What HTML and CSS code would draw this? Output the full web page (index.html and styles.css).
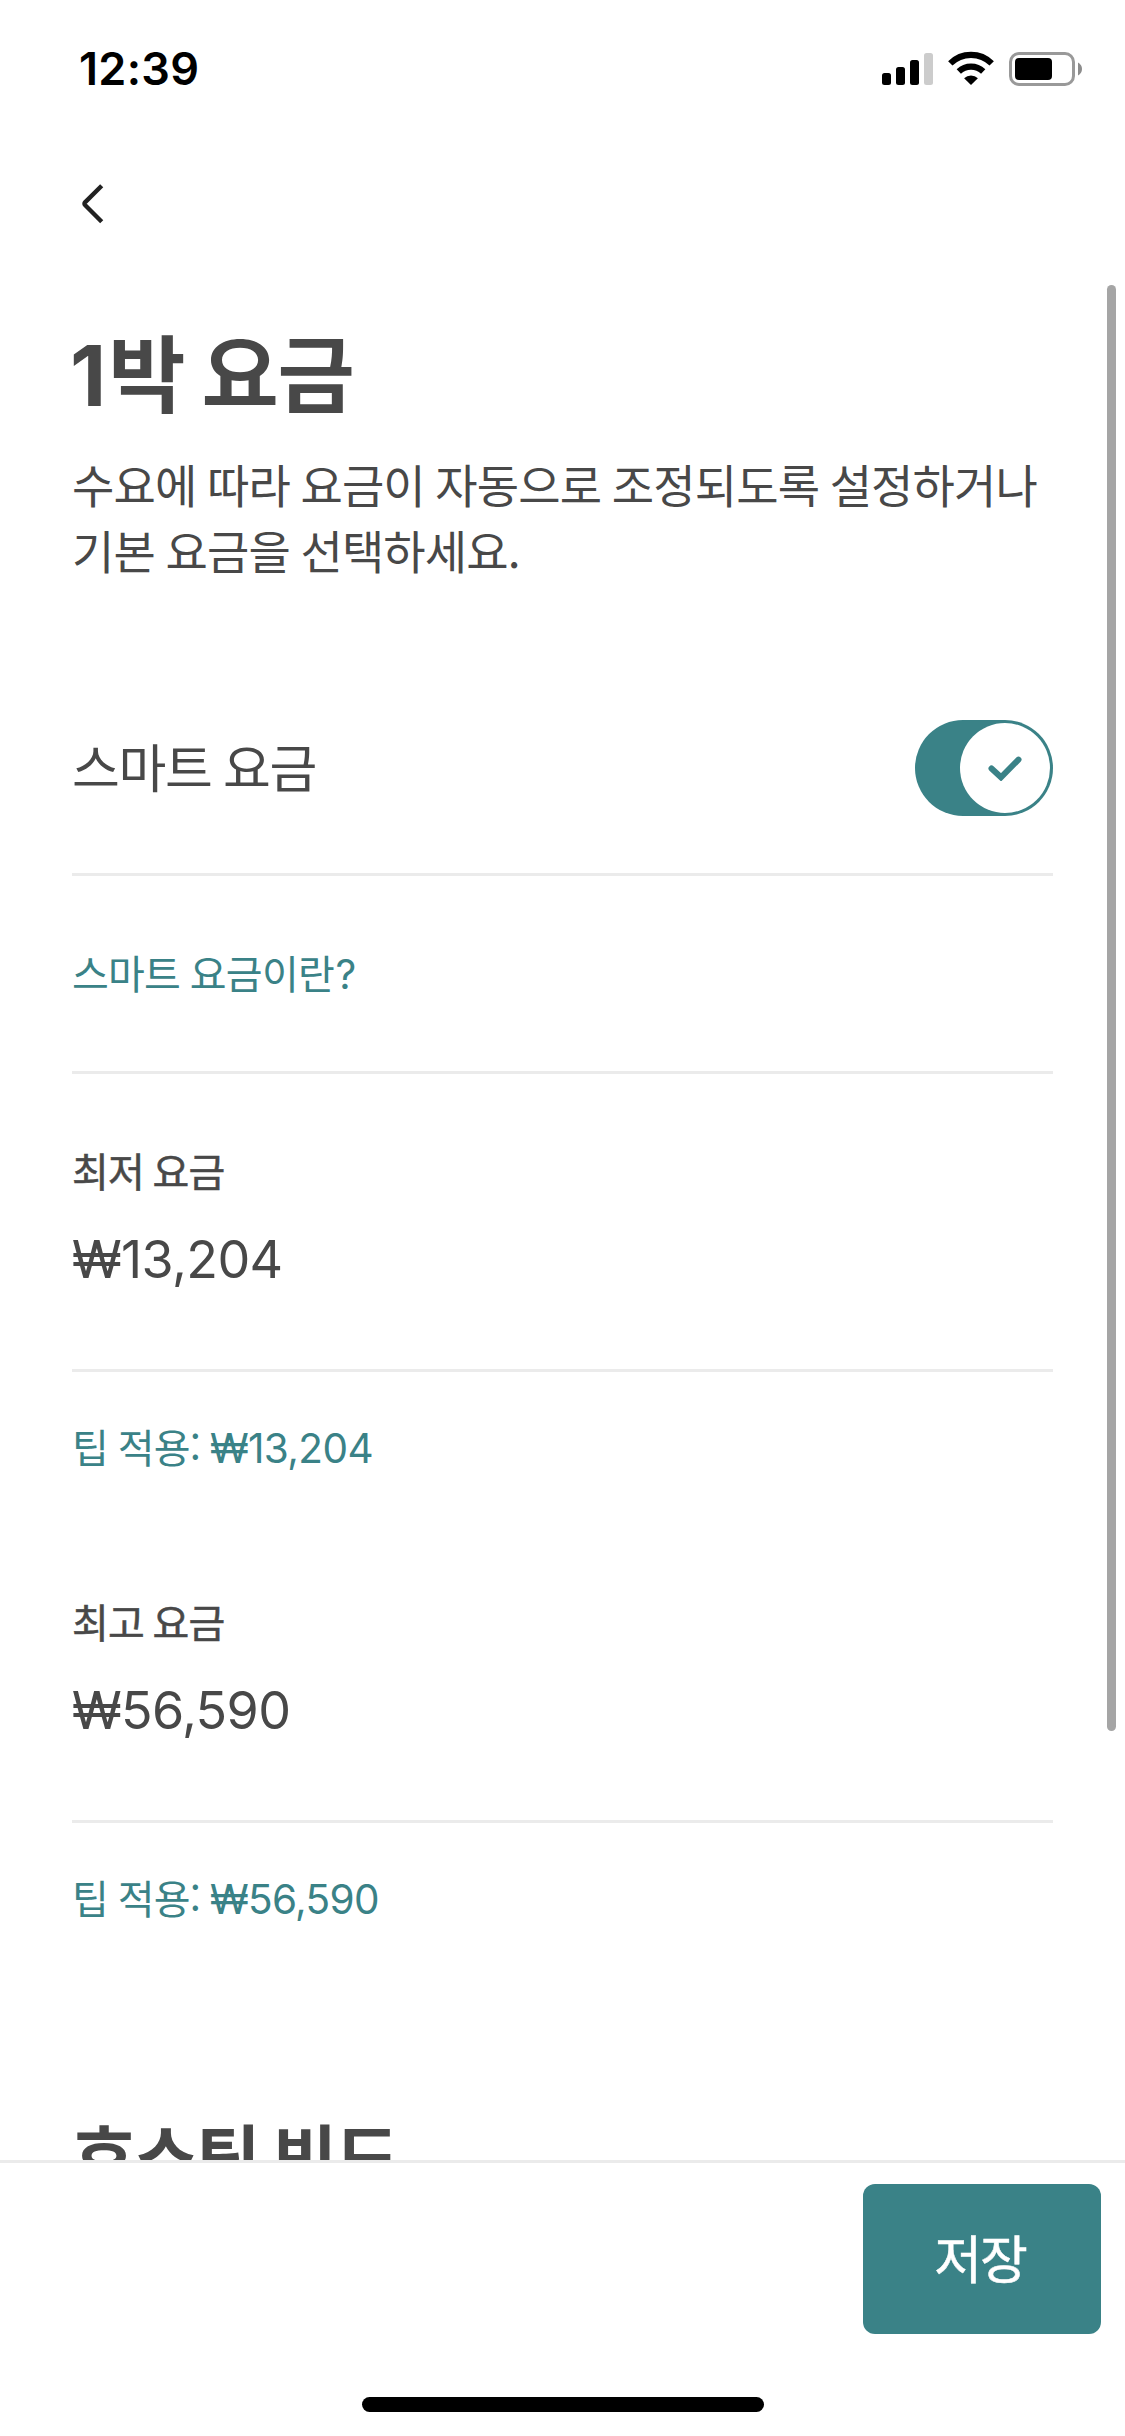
FILE: index.html
```html
<!DOCTYPE html>
<html lang="ko">
<head>
<meta charset="utf-8">
<title>1박 요금</title>
<link rel="stylesheet" href="styles.css">
</head>
<body>
<div class="screen">
  <div class="status-bar">
    <span class="clock">12:39</span>
    <svg class="status-icons" width="204" height="40" viewBox="0 0 204 40">
      <rect x="0" y="22" width="9" height="12" rx="2.5"/>
      <rect x="14" y="16" width="9" height="18" rx="2.5"/>
      <rect x="28" y="9" width="9" height="25" rx="2.5"/>
      <rect x="42" y="2" width="9" height="32" rx="2.5" fill="#ccc"/>
      <g fill="none" stroke="#000" stroke-width="6.2">
        <path d="M68.3 12.4a29.4 29.4 0 0 1 41.4 0"/>
        <path d="M76.8 20.5a17.6 17.6 0 0 1 24.4 0"/>
      </g>
      <path d="M89 34l-6.9-6.8a10.2 10.2 0 0 1 13.8 0z"/>
      <rect x="128.5" y="2.5" width="63" height="31" rx="8.5" fill="none" stroke="#999" stroke-width="3"/>
      <rect x="133" y="7" width="37" height="22" rx="4"/>
      <path d="M196 11.5c2.6 1.5 4 3.9 4 6.5s-1.4 5-4 6.5z" fill="#8c8c8c"/>
    </svg>
  </div>

  <header class="nav">
    <svg class="back" width="24" height="42" viewBox="0 0 24 42">
      <path d="M21.7 2.8L5 19.4a1.8 1.8 0 0 0 0 2.6L21.7 38.7" fill="none" stroke="#222" stroke-width="4.4" stroke-linejoin="round"/>
    </svg>
  </header>

  <main class="content">
    <h1 class="title"><span class="title-num">1</span>박 요금</h1>
    <p class="description">수요에 따라 요금이 자동으로 조정되도록 설정하거나<br>기본 요금을 선택하세요.</p>

    <div class="toggle-row">
      <span class="toggle-label">스마트 요금</span>
      <div class="toggle">
        <div class="knob">
          <svg width="34" height="25" viewBox="0 0 34 25">
            <path d="M3.5 12.5L13 21.3L30.5 3.6" fill="none" stroke="#3a8287" stroke-width="6" stroke-linecap="round" stroke-linejoin="miter"/>
          </svg>
        </div>
      </div>
    </div>

    <div class="link-row"><a class="link">스마트 요금이란<span class="latin question">?</span></a></div>

    <section class="price">
      <div class="field">
        <div class="label">최저 요금</div>
        <div class="value">₩13,204</div>
      </div>
      <div class="tip">팁 적용: <span class="latin">₩13,204</span></div>
    </section>

    <section class="price">
      <div class="field">
        <div class="label">최고 요금</div>
        <div class="value">₩56,590</div>
      </div>
      <div class="tip">팁 적용: <span class="latin">₩56,590</span></div>
    </section>

    <h2 class="section-title">호스팅 빈도</h2>
  </main>

  <footer class="footer">
    <button class="save">저장</button>
    <div class="home-indicator"></div>
  </footer>

  <div class="scrollbar"></div>
</div>
</body>
</html>
```
FILE: styles.css
```css
* {
  box-sizing: border-box;
}

body {
  margin: 0;
  background: #fff;
  color: #484848;
  font-family: "Noto Sans CJK KR", sans-serif;
}

.screen {
  position: relative;
  display: flex;
  flex-direction: column;
  width: 1125px;
  height: 2436px;
  overflow: hidden;
}

.status-bar {
  display: flex;
  flex: none;
  justify-content: space-between;
  height: 132px;
  padding: 37px 39px 0 79px;
}

.clock {
  color: #000;
  font: 600 45px/64px Inter, sans-serif;
  letter-spacing: 0.3px;
}

.status-icons {
  margin-top: 14px;
}

.nav {
  flex: none;
  height: 132px;
  padding: 51px 80px 0;
}

.back {
  display: block;
}

.content {
  flex: 1;
  min-height: 0;
  padding: 56px 72px 0;
  overflow: hidden;
}

.title {
  margin: 0;
  font-size: 84px;
  font-weight: 700;
  line-height: 100px;
  letter-spacing: -1.3px;
  word-spacing: -5px;
}

.title-num {
  margin-left: -2px;
  font-family: Inter, sans-serif;
  line-height: 0;
  letter-spacing: 2px;
}

.description {
  margin: 30px 0 0;
  font-size: 46px;
  line-height: 66px;
  letter-spacing: -0.85px;
  word-spacing: -1.5px;
  white-space: nowrap;
}

.toggle-row {
  display: flex;
  align-items: center;
  justify-content: space-between;
  margin-top: 81px;
  padding: 57px 0;
  border-bottom: 3px solid #ebebeb;
}

.toggle-label {
  padding-bottom: 5px;
  font-size: 52px;
  line-height: 64px;
  letter-spacing: -1.35px;
  word-spacing: -1.7px;
}

.toggle {
  display: flex;
  justify-content: flex-end;
  width: 138px;
  height: 96px;
  padding: 3px;
  border-radius: 48px;
  background: #3a8287;
}

.knob {
  display: flex;
  align-items: center;
  justify-content: center;
  width: 90px;
  height: 90px;
  border-radius: 50%;
  background: #fff;
}

.link-row {
  display: flex;
  align-items: center;
  height: 198px;
  padding-bottom: 3px;
  border-bottom: 3px solid #ebebeb;
}

.link,
.tip {
  color: #3a8287;
  font-size: 40px;
  line-height: 48px;
  letter-spacing: -0.75px;
  word-spacing: -0.8px;
}

.field {
  padding: 72px 0 77px;
  border-bottom: 3px solid #ebebeb;
}

.label {
  font-size: 40px;
  line-height: 48px;
  letter-spacing: -0.8px;
  word-spacing: -2px;
  -webkit-text-stroke: 0.5px currentColor;
}

.value {
  margin-top: 34px;
  font-family: Inter, sans-serif;
  font-size: 52px;
  line-height: 64px;
  letter-spacing: -0.6px;
}

.tip {
  margin: 50px 0 55px;
}

.latin {
  font-family: Inter, sans-serif;
  font-size: 40.5px;
  line-height: 0;
  letter-spacing: -0.6px;
}

.question {
  margin-left: 1.5px;
}

.section-title {
  margin: 188px 0 0;
  font-size: 70px;
  font-weight: 700;
  line-height: 90px;
  letter-spacing: -2.3px;
  word-spacing: -2.8px;
}

.footer {
  display: flex;
  flex: none;
  flex-direction: column;
  height: 276px;
  padding: 21px 24px 24px;
  border-top: 3px solid #ebebeb;
  background: #fff;
}

.save {
  align-self: flex-end;
  width: 238px;
  height: 150px;
  padding: 0 4px 6px 0;
  border: 0;
  border-radius: 12px;
  background: #3a8287;
  color: #fff;
  font-family: inherit;
  font-size: 52px;
  letter-spacing: -2px;
  -webkit-text-stroke: 0.5px currentColor;
}

.home-indicator {
  align-self: center;
  width: 402px;
  height: 15px;
  margin-top: auto;
  border-radius: 8px;
  background: #000;
}

.scrollbar {
  position: absolute;
  top: 285px;
  right: 9px;
  width: 9px;
  height: 1446px;
  border-radius: 5px;
  background: #a5a5a5;
}
```
